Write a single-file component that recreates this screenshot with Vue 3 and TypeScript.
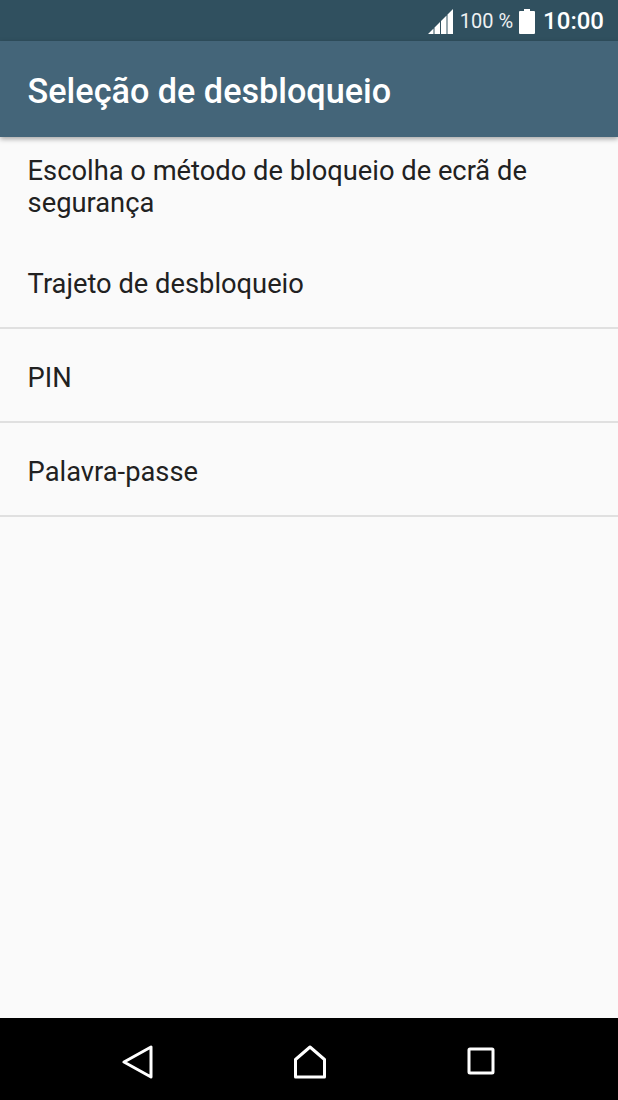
<template>
  <div class="screen">
    <div class="status-bar">
      <svg class="signal" width="25" height="25" viewBox="0 0 25 25">
        <path d="M0 25L5.5 19.5V25zM6.5 18.5L12 13V25H6.5zM13 12L18.5 6.5V25H13zM19.5 5.5L25 0V25H19.5z" fill="#fff" />
      </svg>
      <span class="battery-text">100 %</span>
      <svg class="battery" width="16" height="25" viewBox="0 0 16 25">
        <path d="M5 0h6v2h4a1 1 0 0 1 1 1v21a1 1 0 0 1-1 1H1a1 1 0 0 1-1-1V3a1 1 0 0 1 1-1h4z" fill="#fff" />
      </svg>
      <span class="clock">10:00</span>
    </div>
    <header class="app-bar">Seleção de desbloqueio</header>
    <main class="content">
      <p class="intro">Escolha o método de bloqueio de ecrã de segurança</p>
      <ul class="options">
        <li v-for="option in options" :key="option">{{ option }}</li>
      </ul>
    </main>
    <nav class="nav-bar">
      <svg width="32" height="34" viewBox="0 0 32 34">
        <path d="M2 17L29 2v30z" class="nav-icon" />
      </svg>
      <svg width="36" height="34" viewBox="0 0 36 34">
        <path d="M3.5 32V14.5L18 2l14.5 12.5V32z" class="nav-icon" />
      </svg>
      <svg width="30" height="30" viewBox="0 0 30 30">
        <rect x="2" y="2" width="24" height="24" rx="1" class="nav-icon" />
      </svg>
    </nav>
  </div>
</template>

<script setup lang="ts">
const options: string[] = ['Trajeto de desbloqueio', 'PIN', 'Palavra-passe'];
</script>

<style>
html, body { margin: 0; }
</style>

<style scoped>
.screen {
  width: 618px;
  height: 1100px;
  display: flex;
  flex-direction: column;
  background: #fafafa;
  font-family: Roboto, "Liberation Sans", sans-serif;
  overflow: hidden;
}

.status-bar {
  height: 41px;
  flex: none;
  box-sizing: border-box;
  background: #30505f;
  color: #fff;
  display: flex;
  align-items: center;
  justify-content: flex-end;
  padding: 1px 14px 0 0;
}
.signal { margin-right: 7px; }
.battery-text { font-size: 20px; margin-right: 6px; opacity: 0.92; }
.battery { margin-right: 8px; }
.clock { font-size: 24px; font-weight: 500; }

.app-bar {
  height: 96px;
  flex: none;
  box-sizing: border-box;
  background: #446579;
  color: #fff;
  font-size: 34.2px;
  font-weight: 500;
  line-height: 100px;
  padding-left: 27.6px;
  box-shadow: 0 2px 5px rgba(0, 0, 0, 0.35);
  position: relative;
}

.content { flex: 1; }

.intro {
  margin: 0;
  padding: 18px 28px 16px 27.6px;
  font-size: 27.3px;
  line-height: 32px;
  color: #212121;
}

.options {
  list-style: none;
  margin: 0;
  padding: 0;
}
.options li {
  height: 94px;
  box-sizing: border-box;
  padding: 32px 28px 0 27.6px;
  font-size: 27.3px;
  line-height: 34px;
  color: #212121;
  border-bottom: 2px solid #e0e0e0;
}

.nav-bar {
  height: 82px;
  flex: none;
  box-sizing: border-box;
  background: #000;
  display: flex;
  align-items: center;
  justify-content: space-between;
  padding: 5px 121px 0 122px;
}
.nav-bar svg:nth-child(2) { margin-left: -2px; }
.nav-icon {
  fill: none;
  stroke: #fff;
  stroke-width: 3;
  stroke-linejoin: round;
}
</style>
